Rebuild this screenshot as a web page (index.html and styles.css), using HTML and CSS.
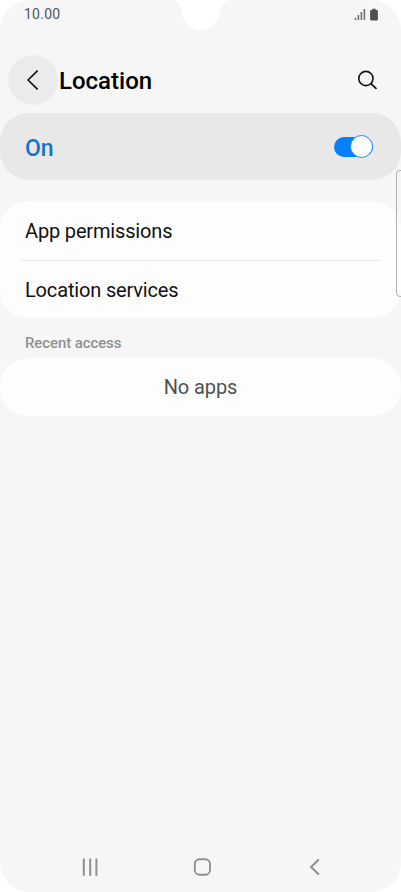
FILE: index.html
```html
<!DOCTYPE html>
<html lang="en">
<head>
<meta charset="utf-8">
<title>Location</title>
<link rel="stylesheet" href="styles.css">
</head>
<body>
<main class="phone">
  <svg class="notch" viewBox="0 0 62 30" aria-hidden="true"><path d="M0 0C8 0 11 4 12 11C13 22 21 30 31 30S49 22 50 11C51 4 54 0 62 0Z" fill="#fff"/></svg>
  <div class="status">
    <span class="time">10.00</span>
    <svg class="status-icons" viewBox="0 0 26 14" aria-hidden="true">
      <path d="M1.5 9.7V12M4.4 7V12M7.4 4V12M10.4 1V12" stroke="#707070" stroke-width="1.6" fill="none"/>
      <path d="M18.3 .8H21.7V2H22.9Q23.9 2 23.9 3V11.2Q23.9 12.4 22.7 12.4H17.3Q16.1 12.4 16.1 11.2V3Q16.1 2 17.1 2H18.3Z" fill="#505050"/>
    </svg>
  </div>
  <header class="header">
    <span class="back"><svg viewBox="0 0 50 50" aria-hidden="true"><path d="M29.6 15.6L20.1 25L29.6 34.4" fill="none" stroke="#111" stroke-width="1.6"/></svg></span>
    <h1 class="title">Location</h1>
    <svg class="search" viewBox="0 0 20 20" aria-hidden="true"><circle cx="8.9" cy="8.5" r="7.1" fill="none" stroke="#111" stroke-width="1.6"/><path d="M13.8 13.4L19.5 18.9" stroke="#111" stroke-width="1.8"/></svg>
  </header>
  <section class="master">
    <span class="on">On</span>
    <span class="switch"><span class="knob"></span></span>
  </section>
  <section class="card list">
    <div class="row"><span class="label">App permissions</span></div>
    <div class="row"><span class="label">Location services</span></div>
  </section>
  <h2 class="subhead">Recent access</h2>
  <section class="card empty">No apps</section>
  <nav class="nav">
    <svg viewBox="0 0 20 20" aria-hidden="true"><path d="M3.8 2.2V18M10.2 2.2V18M16.4 2.2V18" stroke="#8f8f8f" stroke-width="2" stroke-linecap="round"/></svg>
    <svg viewBox="0 0 20 20" aria-hidden="true"><rect x="1.8" y="2.3" width="15.2" height="15.4" rx="4.8" fill="none" stroke="#8f8f8f" stroke-width="1.9"/></svg>
    <svg viewBox="0 0 20 20" aria-hidden="true"><path d="M13.8 2.5L6.1 10L13.8 17.5" fill="none" stroke="#8f8f8f" stroke-width="2"/></svg>
  </nav>
  <span class="edge"></span>
</main>
</body>
</html>
```
FILE: styles.css
```css
* { box-sizing: border-box; }
body { margin: 0; background: #fff; font-family: Roboto, sans-serif; color: #111; }
.phone { position: relative; width: 401px; height: 892px; display: flex; flex-direction: column; background: #f6f6f6; border-radius: 30px; overflow: hidden; }
.notch { position: absolute; left: 170px; top: 0; width: 62px; height: 30px; }
.status { height: 30px; padding: 6px 21px 0 24px; display: flex; justify-content: space-between; }
.time { font-size: 14px; line-height: 16px; letter-spacing: .25px; color: #555; }
.status-icons { width: 26px; height: 14px; margin-top: 2px; }
.header { height: 83px; padding: 33px 24px 16px 8px; display: flex; align-items: center; }
.back { width: 50px; height: 50px; flex: none; border-radius: 50%; background: #ebebeb; }
.back svg { display: block; width: 50px; height: 50px; }
.title { margin: 1px 0 0 1px; font-size: 24px; line-height: 30px; font-weight: 500; letter-spacing: 0; color: #000; }
.search { width: 20px; height: 20px; margin-left: auto; }
.master { height: 67px; padding: 0 28px 0 25px; border-radius: 29px; background: #e8e8e8; display: flex; align-items: center; justify-content: space-between; }
.on { font-size: 23px; font-weight: 500; color: #1373ce; line-height: 28px; margin-top: 4px; letter-spacing: -.2px; }
.switch { width: 39px; height: 20px; border-radius: 10px; background: #0580ff; display: flex; justify-content: flex-end; align-items: center; }
.knob { width: 23px; height: 23px; flex: none; border-radius: 50%; background: #fcfcfc; border: 1px solid #2687ed; }
.card { background: #fdfdfd; border-radius: 28px; }
.list { height: 117px; margin-top: 21px; padding: 0 21px; }
.row { height: 59px; padding: 1px 4px 0; display: flex; align-items: center; }
.row + .row { height: 58px; border-top: 1px solid #e5e5e5; }
.label { font-size: 20px; line-height: 24px; letter-spacing: -.16px; }
.subhead { margin: 0; height: 40px; padding: 16px 25px 0; font-size: 15px; line-height: 18px; font-weight: 500; letter-spacing: -.1px; color: #919191; }
.empty { height: 58px; display: flex; align-items: center; justify-content: center; font-size: 20px; letter-spacing: -.08px; color: #505050; }
.nav { margin-top: auto; height: 50px; padding: 0 76px 0 80px; display: flex; align-items: center; justify-content: space-between; }
.nav svg { width: 20px; height: 20px; }
.edge { position: absolute; left: 396px; top: 170px; width: 10px; height: 127px; border: 1px solid #b0b0b0; border-radius: 4px; }
```
